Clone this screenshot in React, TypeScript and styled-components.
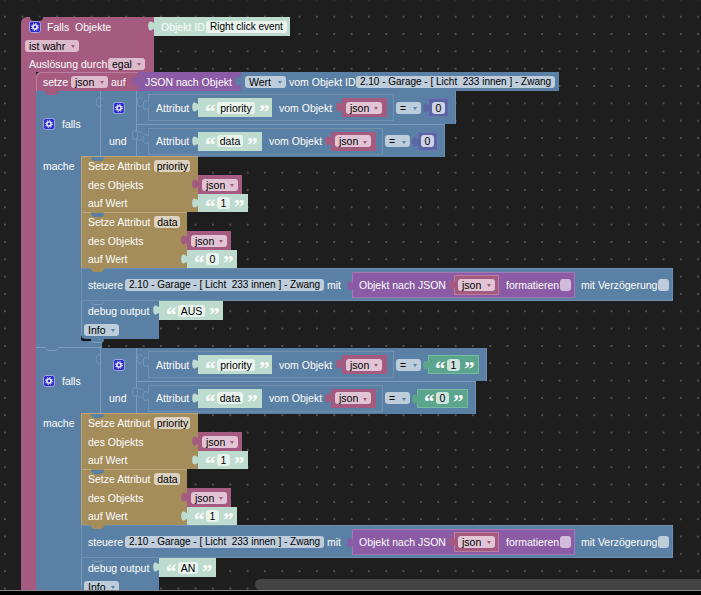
import React from "react";
import styled, { createGlobalStyle } from "styled-components";

const PINK = "#a55b80";
const BLUE = "#5b80a5";
const GOLD = "#a58c5b";
const PURPLE = "#8c5ba5";
const TEAL = "#bddccf";
const INDIGO = "#5b67a5";
const GREEN = "#5ba58c";

const Global = createGlobalStyle`
  html, body { margin: 0; padding: 0; background: #000; overflow: hidden; }
  * { box-sizing: border-box; }
`;

const Canvas = styled.div`
  position: relative;
  width: 701px;
  height: 591px;
  overflow: hidden;
  border-bottom: 1px solid #8a8a8a;
  background-color: #1e1e1e;
  background-image: radial-gradient(circle, #505050 0.7px, transparent 1.1px);
  background-size: 17.33px 17.33px;
  background-position: -3.67px -9.3px;
  font-family: "Liberation Sans", Arial, sans-serif;
  font-size: 10.5px;
`;

const Scrollbar = styled.div`
  position: absolute;
  left: 255px;
  top: 579px;
  width: 446px;
  height: 11px;
  border-radius: 6px 0 0 6px;
  background: #434343;
  z-index: 5;
`;

const EventRoot = styled.div`
  position: absolute;
  left: 21px;
  top: 17px;
  display: flex;
  flex-direction: column;
`;

const TopRow = styled.div`
  display: flex;
`;

const PinkRow = styled.div<{ $h: number; $pad: number; $gap?: number; $top?: boolean }>`
  position: relative;
  width: 133px;
  height: ${(p) => p.$h}px;
  padding-left: ${(p) => p.$pad}px;
  display: flex;
  align-items: center;
  gap: ${(p) => p.$gap ?? 3}px;
  background: ${PINK};
  border-top-left-radius: ${(p) => (p.$top ? 6 : 0)}px;
`;

const Body = styled.div`
  display: flex;
`;

const Band = styled.div`
  width: 15px;
  background: ${PINK};
`;

const Column = styled.div`
  display: flex;
  flex-direction: column;
`;

const SetRow = styled.div`
  display: flex;
  height: 19px;
`;

const Piece = styled.div<{ $w: number; $c: string; $h?: number; $pad?: number; $gap?: number; $edge?: string }>`
  position: relative;
  flex: none;
  width: ${(p) => p.$w}px;
  height: ${(p) => p.$h ?? 19}px;
  padding-left: ${(p) => p.$pad ?? 7}px;
  display: flex;
  align-items: center;
  gap: ${(p) => p.$gap ?? 3}px;
  background: ${(p) => p.$c};
  ${(p) => (p.$edge ? `border: 1px solid ${p.$edge}; padding-left: ${(p.$pad ?? 7) - 1}px;` : "")}
`;

const SetzeHead = styled(Piece)`
  border-top-left-radius: 5px;
  box-shadow: inset 1px 1px 0 #bd7c9c;
`;

const Label = styled.span<{ $w?: number }>`
  flex: none;
  color: #fff;
  white-space: nowrap;
  line-height: 12px;
  ${(p) => (p.$w ? `width: ${p.$w}px;` : "")}
`;

const Chip = styled.span<{ $w: number; $bg: string; $center?: boolean; $tight?: boolean }>`
  flex: none;
  width: ${(p) => p.$w}px;
  height: 12px;
  padding: 0 4px;
  display: inline-flex;
  align-items: center;
  justify-content: ${(p) => (p.$center ? "center" : "space-between")};
  border-radius: 3px;
  background: ${(p) => p.$bg};
  color: #000;
  white-space: pre;
  line-height: 12px;
  ${(p) => (p.$tight ? "font-size: 10px;" : "")}
`;

const Arrow = styled.i<{ $c: string }>`
  flex: none;
  width: 0;
  height: 0;
  margin-top: 2px;
  border-left: 2px solid transparent;
  border-right: 2px solid transparent;
  border-top: 3px solid ${(p) => p.$c};
`;

const Quote = styled.span`
  flex: none;
  width: 8px;
  height: 12px;
  color: #fff;
  font-family: "Liberation Serif", serif;
  font-weight: bold;
  font-size: 21px;
  line-height: 20px;
  text-align: center;
`;

const TabBox = styled.svg<{ $top: number; $left?: number }>`
  position: absolute;
  left: ${(p) => p.$left ?? -6}px;
  top: ${(p) => p.$top}px;
  width: 6px;
  height: 12px;
  z-index: 2;
`;

const Tab = ({ c, top = 3, left, stroke }: { c: string; top?: number; left?: number; stroke?: string }) => (
  <TabBox $top={top} $left={left} viewBox="0 0 6 12">
    <path
      d="M6.5 1 V3 C5 3.4 4.6 2 3 1.6 C1 1.2 0.2 3 0.2 6 C0.2 9 1 10.8 3 10.4 C4.6 10 5 8.6 6.5 9 V11"
      fill={c}
      stroke={stroke ?? "none"}
      strokeWidth={stroke ? 0.8 : 0}
    />
  </TabBox>
);

const Bump = styled.div<{ $x: number; $c: string; $top?: boolean; $line?: string }>`
  position: absolute;
  left: ${(p) => p.$x}px;
  ${(p) => (p.$top ? "top: 0;" : "bottom: -4px;")}
  width: 13px;
  height: 4px;
  border-radius: 0 0 7px 7px;
  background: ${(p) => p.$c};
  ${(p) => (p.$line ? `border-bottom: 1px solid ${p.$line};` : "")}
  z-index: 3;
`;

const GearBox = styled.svg`
  flex: none;
  width: 12px;
  height: 12px;
`;

const Gear = () => (
  <GearBox viewBox="0 0 12 12">
    <rect x="0.5" y="0.5" width="11" height="11" rx="2.2" fill="#2f2fd0" stroke="#b9b9ee" strokeWidth="0.8" />
    <circle cx="6" cy="6" r="2.1" fill="none" stroke="#fff" strokeWidth="1.4" />
    <circle cx="6" cy="6" r="3.4" fill="none" stroke="#fff" strokeWidth="1" strokeDasharray="1.3 1.37" />
  </GearBox>
);

const Dropdown = ({ w, bg, arrow, children }: { w: number; bg: string; arrow: string; children: React.ReactNode }) => (
  <Chip $w={w} $bg={bg}>
    {children}
    <Arrow $c={arrow} />
  </Chip>
);

const QuotedValue = ({ w, fw, text, c = TEAL, fbg = "#e9f4ef", h = 19, edge }: { w: number; fw: number; text: string; c?: string; fbg?: string; h?: number; edge?: string }) => (
  <Piece $w={w} $c={c} $h={h} $pad={7} $gap={4} $edge={edge}>
    <Tab c={c} />
    <Quote>“</Quote>
    <Chip $w={fw} $bg={fbg} $center>
      {text}
    </Chip>
    <Quote>”</Quote>
  </Piece>
);

const JsonValue = ({ w = 45, h = 19 }: { w?: number; h?: number }) => (
  <Piece $w={w} $c={PINK} $h={h} $pad={4}>
    <Tab c={PINK} />
    <Dropdown w={36} bg="#e2c5d4" arrow={PINK}>
      json
    </Dropdown>
  </Piece>
);

const Header = styled.div`
  display: flex;
`;

const FallsCell = styled.div`
  position: relative;
  flex: none;
  width: 65px;
  height: 66px;
  padding-left: 7px;
  display: flex;
  align-items: center;
  gap: 7px;
  background: ${BLUE};
  border-right: 1px solid #7d9bba;
`;

const AndCell = styled.div`
  position: relative;
  flex: none;
  width: 36px;
  height: 66px;
  background: ${BLUE};
  border-right: 1px solid #7d9bba;
`;

const AndLine = styled.div<{ $pad: number }>`
  height: 33px;
  padding-left: ${(p) => p.$pad}px;
  display: flex;
  align-items: center;
`;

const CondLine = styled.div<{ $w: number; $second?: boolean }>`
  position: relative;
  width: ${(p) => p.$w}px;
  height: 33px;
  padding-left: 11px;
  display: flex;
  align-items: center;
  background: ${BLUE};
  ${(p) => (p.$second ? "border-top: 1px solid #7d9bba;" : "")}
  box-shadow: inset -1px 0 0 #6f8fb0;
`;

const AttrBlock = styled.div<{ $w: number }>`
  position: relative;
  flex: none;
  width: ${(p) => p.$w}px;
  height: 27px;
  padding-left: 7px;
  display: flex;
  align-items: center;
  background: ${BLUE};
  border: 1px solid #7390af;
`;

const VomLabel = styled(Label)`
  padding-left: 7px;
`;

const EqChip = styled(Chip)`
  margin: 0 7px 0 2px;
`;

const NumValue = ({ v }: { v: string }) => (
  <Piece $w={21} $c={INDIGO} $pad={4} $edge="#6b77b4">
    <Tab c={INDIGO} />
    <Chip $w={13} $bg="#cfd2e6" $center>
      {v}
    </Chip>
  </Piece>
);

const Lower = styled.div`
  display: flex;
`;

const MacheCol = styled.div`
  flex: none;
  width: 45px;
  padding: 3px 0 0 7px;
  background: ${BLUE};
`;

const Stack = styled.div`
  display: flex;
  flex-direction: column;
  margin-top: -1px;
`;

const AttrSet = styled.div`
  display: flex;
`;

const GoldPanel = styled.div<{ $w: number }>`
  position: relative;
  flex: none;
  width: ${(p) => p.$w}px;
  height: 56px;
  background: ${GOLD};
  border-top: 1px solid #bda67a;
  border-left: 1px solid #bda67a;
`;

const GoldLine = styled.div<{ $h: number }>`
  height: ${(p) => p.$h}px;
  padding-left: 6px;
  display: flex;
  align-items: center;
  gap: 4px;
`;

const ValueCol = styled.div`
  display: flex;
  flex-direction: column;
  padding-top: 19px;
`;

const SetAttr = ({ w, attr, fw, val }: { w: number; attr: string; fw: number; val: string }) => (
  <AttrSet>
    <GoldPanel $w={w}>
      <Bump $x={9} $c={BLUE} $top />
      <GoldLine $h={18}>
        <Label>Setze Attribut</Label>
        <Chip $w={fw} $bg="#dcd2bf" $center>
          {attr}
        </Chip>
      </GoldLine>
      <GoldLine $h={19}>
        <Label>des Objekts</Label>
      </GoldLine>
      <GoldLine $h={18}>
        <Label>auf Wert</Label>
      </GoldLine>
      <Bump $x={9} $c={GOLD} />
    </GoldPanel>
    <ValueCol>
      <JsonValue w={44} />
      <QuotedValue w={50} fw={13} text={val} h={18} />
    </ValueCol>
  </AttrSet>
);

const Steuere = styled.div`
  position: relative;
  width: 592px;
  height: 33px;
  padding-left: 6px;
  display: flex;
  align-items: center;
  gap: 3px;
  background: ${BLUE};
  border: 1px solid #6f8fb0;
`;

const CheckBox = styled.span<{ $bg: string }>`
  flex: none;
  width: 11px;
  height: 12px;
  border-radius: 3px;
  background: ${(p) => p.$bg};
`;

const ToJson = styled.div`
  position: relative;
  flex: none;
  width: 223px;
  height: 26px;
  padding-left: 6px;
  margin-right: 3px;
  display: flex;
  align-items: center;
  background: ${PURPLE};
  border: 1px solid #a078b6;
`;

const InnerJson = styled.div`
  position: relative;
  flex: none;
  width: 45px;
  height: 20px;
  margin-right: 7px;
  padding-left: 3px;
  display: flex;
  align-items: center;
  background: ${PINK};
  border: 1px solid #bd7c9c;
`;

const Debug = styled.div`
  display: flex;
`;

const DebugPanel = styled.div`
  position: relative;
  flex: none;
  width: 78px;
  height: 38px;
  background: ${BLUE};
  border-bottom-left-radius: 5px;
  border-left: 1px solid #7d9bba;
`;

const DebugLine = styled.div<{ $pad: number }>`
  height: 19px;
  padding-left: ${(p) => p.$pad}px;
  display: flex;
  align-items: center;
`;

const Footer = styled.div`
  position: relative;
  width: 66px;
  height: 9px;
  background: ${BLUE};
  border-bottom: 1px solid #7d9bba;
`;

const FooterShadow = styled.div`
  position: absolute;
  left: 45px;
  top: 0;
  width: 17px;
  height: 2px;
  border-radius: 0 0 0 3px;
  background: #111;
`;

const GARAGE = "2.10 - Garage - [ Licht  233 innen ] - Zwang";

const Fall = ({ w1, w2, right1, right2, deb, dw, dfw }: { w1: number; w2: number; right1: React.ReactNode; right2: React.ReactNode; deb: string; dw: number; dfw: number }) => (
  <Column>
    <Header>
      <FallsCell>
        <Gear />
        <Label>falls</Label>
      </FallsCell>
      <AndCell>
        <Tab c="none" stroke="#7d9bba" left={-5} top={5} />
        <AndLine $pad={12}>
          <Gear />
        </AndLine>
        <AndLine $pad={8}>
          <Label>und</Label>
        </AndLine>
        <Tab c={BLUE} stroke="#7d9bba" left={31} top={38} />
      </AndCell>
      <Column>
        <CondLine $w={w1}>
          <Tab c={BLUE} stroke="#7d9bba" left={0} top={5} />
          <AttrBlock $w={246}>
            <Tab c={BLUE} stroke="#7d9bba" left={-6} top={4} />
            <Label $w={42}>Attribut</Label>
            <QuotedValue w={74} fw={38} text="priority" />
            <VomLabel $w={70}>vom Objekt</VomLabel>
            <JsonValue />
          </AttrBlock>
          <EqChip $w={25} $bg="#bdcddb">
            =<Arrow $c={BLUE} />
          </EqChip>
          {right1}
        </CondLine>
        <CondLine $w={w2} $second>
          <Tab c={BLUE} stroke="#7d9bba" left={0} top={5} />
          <AttrBlock $w={235}>
            <Tab c={BLUE} stroke="#7d9bba" left={-6} top={4} />
            <Label $w={42}>Attribut</Label>
            <QuotedValue w={64} fw={26} text="data" />
            <VomLabel $w={69}>vom Objekt</VomLabel>
            <JsonValue />
          </AttrBlock>
          <EqChip $w={25} $bg="#bdcddb">
            =<Arrow $c={BLUE} />
          </EqChip>
          {right2}
        </CondLine>
      </Column>
    </Header>
    <Lower>
      <MacheCol>
        <Label>mache</Label>
      </MacheCol>
      <Stack>
        <SetAttr w={117} attr="priority" fw={36} val="1" />
        <SetAttr w={106} attr="data" fw={26} val={deb === "AUS" ? "0" : "1"} />
        <Steuere>
          <Label $w={34}>steuere</Label>
          <Chip $w={199} $bg="#bdcddb" $center $tight>
            {GARAGE}
          </Chip>
          <Label $w={22}>mit</Label>
          <ToJson>
            <Tab c={PURPLE} top={7} />
            <Label $w={95}>Objekt nach JSON</Label>
            <InnerJson>
              <Tab c={PINK} top={3} />
              <Dropdown w={37} bg="#e2c5d4" arrow={PINK}>
                json
              </Dropdown>
            </InnerJson>
            <Label $w={54}>formatieren</Label>
            <CheckBox $bg="#d1bddb" />
          </ToJson>
          <Label $w={74}>mit Verzögerung</Label>
          <CheckBox $bg="#bdcddb" />
        </Steuere>
        <Debug>
          <DebugPanel>
            <Bump $x={9} $c={BLUE} $top $line="#7d9bba" />
            <DebugLine $pad={6}>
              <Label>debug output</Label>
            </DebugLine>
            <DebugLine $pad={2}>
              <Dropdown w={35} bg="#bdcddb" arrow={BLUE}>
                Info
              </Dropdown>
            </DebugLine>
            <Bump $x={9} $c={BLUE} $line="#7d9bba" />
          </DebugPanel>
          <QuotedValue w={dw} fw={dfw} text={deb} />
        </Debug>
      </Stack>
    </Lower>
    <Footer>
      <FooterShadow />
      <Bump $x={9} $c={BLUE} $line="#7d9bba" />
    </Footer>
  </Column>
);

export default function App() {
  return (
    <>
      <Global />
      <Canvas>
        <EventRoot>
          <TopRow>
            <PinkRow $h={19} $pad={8} $gap={6} $top>
              <Bump $x={9} $c="#1e1e1e" $top />
              <Gear />
              <Label>Falls&nbsp; Objekte</Label>
            </PinkRow>
            <Piece $w={136} $c={TEAL} $pad={7} $gap={4}>
              <Tab c={TEAL} />
              <Label $w={41}>Objekt ID</Label>
              <Chip $w={81} $bg="#e9f4ef" $center $tight>
                Right click event
              </Chip>
            </Piece>
          </TopRow>
          <PinkRow $h={19} $pad={4}>
            <Dropdown w={54} bg="#dcbccc" arrow={PINK}>
              ist wahr
            </Dropdown>
          </PinkRow>
          <PinkRow $h={17} $pad={8}>
            <Label $w={76}>Auslösung durch</Label>
            <Dropdown w={37} bg="#dcbccc" arrow={PINK}>
              egal
            </Dropdown>
          </PinkRow>
          <Body>
            <Band />
            <Column>
              <SetRow>
                <SetzeHead $w={102} $c={PINK}>
                  <Label $w={25}>setze</Label>
                  <Dropdown w={37} bg="#dcbccc" arrow={PINK}>
                    json
                  </Dropdown>
                  <Label>auf</Label>
                  <Bump $x={9} $c={PINK} />
                </SetzeHead>
                <Piece $w={103} $c={PURPLE}>
                  <Tab c={PURPLE} />
                  <Label>JSON nach Objekt</Label>
                </Piece>
                <Piece $w={318} $c={BLUE} $pad={4}>
                  <Tab c={BLUE} />
                  <Dropdown w={41} bg="#bdcddb" arrow={BLUE}>
                    Wert
                  </Dropdown>
                  <Label $w={64}>vom Objekt ID</Label>
                  <Chip $w={199} $bg="#bdcddb" $center $tight>
                    {GARAGE}
                  </Chip>
                </Piece>
              </SetRow>
              <Fall
                w1={319}
                w2={308}
                right1={<NumValue v="0" />}
                right2={<NumValue v="0" />}
                deb="AUS"
                dw={64}
                dfw={27}
              />
              <Fall
                w1={350}
                w2={339}
                right1={<QuotedValue w={51} fw={13} text="1" c={GREEN} fbg="#cde4dc" edge="#79b8a2" />}
                right2={<QuotedValue w={51} fw={13} text="0" c={GREEN} fbg="#cde4dc" edge="#79b8a2" />}
                deb="AN"
                dw={57}
                dfw={20}
              />
            </Column>
          </Body>
        </EventRoot>
        <Scrollbar />
      </Canvas>
    </>
  );
}
